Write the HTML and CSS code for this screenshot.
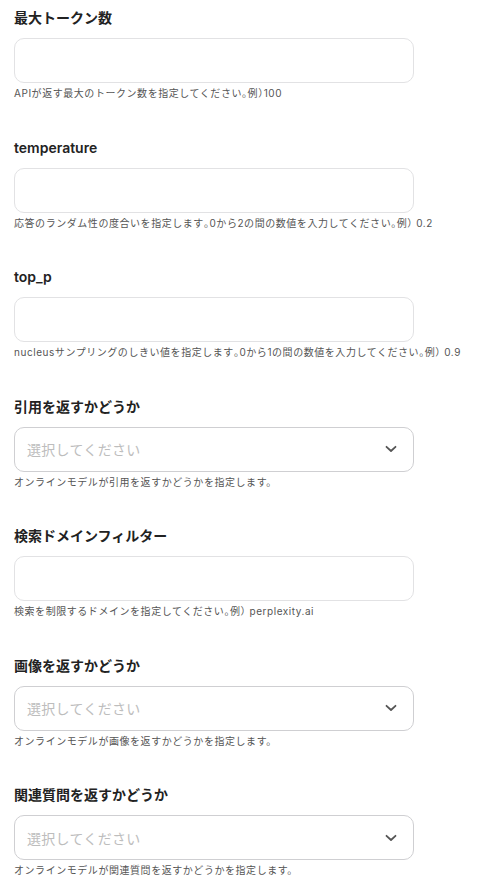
FILE: index.html
```html
<!DOCTYPE html>
<html lang="ja">
<head>
<meta charset="utf-8">
<link rel="stylesheet" href="styles.css">
</head>
<body>
<div class="form">
  <div class="field">
    <div class="label">最大トークン数</div>
    <div class="input"></div>
    <div class="help">APIが返す最大のトークン数を指定してください<span class="h">。</span>例<span class="h">）</span>100</div>
  </div>
  <div class="field">
    <div class="label">temperature</div>
    <div class="input"></div>
    <div class="help">応答のランダム性の度合いを指定します<span class="h">。</span>0から2の間の数値を入力してください<span class="h">。</span>例<span class="h">）</span> 0.2</div>
  </div>
  <div class="field">
    <div class="label">top_p</div>
    <div class="input"></div>
    <div class="help">nucleusサンプリングのしきい値を指定します<span class="h">。</span>0から1の間の数値を入力してください<span class="h">。</span>例<span class="h">）</span> 0.9</div>
  </div>
  <div class="field">
    <div class="label">引用を返すかどうか</div>
    <div class="input select"><span class="placeholder">選択してください</span><svg class="chev" width="12" height="8" viewBox="0 0 12 8"><path d="M1.5 1.8 L6 6 L10.5 1.8" fill="none" stroke="#555" stroke-width="1.8" stroke-linecap="round" stroke-linejoin="round"/></svg></div>
    <div class="help">オンラインモデルが引用を返すかどうかを指定します。</div>
  </div>
  <div class="field">
    <div class="label">検索ドメインフィルター</div>
    <div class="input"></div>
    <div class="help">検索を制限するドメインを指定してください<span class="h">。</span>例<span class="h">）</span> perplexity.ai</div>
  </div>
  <div class="field">
    <div class="label">画像を返すかどうか</div>
    <div class="input select"><span class="placeholder">選択してください</span><svg class="chev" width="12" height="8" viewBox="0 0 12 8"><path d="M1.5 1.8 L6 6 L10.5 1.8" fill="none" stroke="#555" stroke-width="1.8" stroke-linecap="round" stroke-linejoin="round"/></svg></div>
    <div class="help">オンラインモデルが画像を返すかどうかを指定します。</div>
  </div>
  <div class="field">
    <div class="label">関連質問を返すかどうか</div>
    <div class="input select"><span class="placeholder">選択してください</span><svg class="chev" width="12" height="8" viewBox="0 0 12 8"><path d="M1.5 1.8 L6 6 L10.5 1.8" fill="none" stroke="#555" stroke-width="1.8" stroke-linecap="round" stroke-linejoin="round"/></svg></div>
    <div class="help">オンラインモデルが関連質問を返すかどうかを指定します。</div>
  </div>
</div>
</body>
</html>
```
FILE: styles.css
```css
html, body {
  margin: 0;
  padding: 0;
  background: #fff;
}
body {
  font-family: "Inter", "Noto Sans CJK JP", sans-serif;
  color: #222;
}
.form {
  padding: 8px 14px 0 14px;
  display: flex;
  flex-direction: column;
  gap: 37.5px;
}
.field {
  display: flex;
  flex-direction: column;
}
.label {
  font-size: 14px;
  font-weight: 600;
  line-height: 20px;
  margin-bottom: 10px;
  color: #222;
}
.input {
  box-sizing: border-box;
  width: 400px;
  height: 45px;
  border: 1px solid #e2e2e4;
  border-radius: 10px;
  background: #fff;
}
.select {
  border-color: #cfcfd2;
  display: flex;
  align-items: center;
  justify-content: space-between;
  padding: 0 16px 0 12px;
}
.placeholder {
  font-size: 14px;
  color: #bdbdbd;
  letter-spacing: 0.3px;
}
.help {
  margin-top: 3px;
  font-size: 10px;
  line-height: 14px;
  color: #555;
  white-space: nowrap;
  letter-spacing: 0.55px;
}
.h {
  font-family: "Noto Sans CJK JP", sans-serif;
  font-feature-settings: "halt";
}
```
